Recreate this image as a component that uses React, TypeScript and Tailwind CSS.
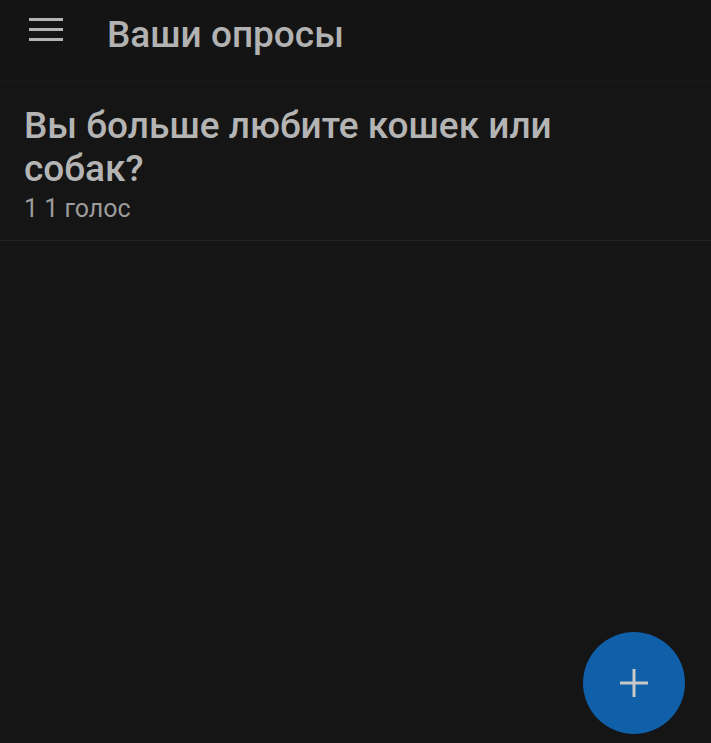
import React from "react";

export default function App() {
  return (
    <div
      className="relative w-[711px] h-[743px] bg-[#151515] overflow-hidden"
      style={{ fontFamily: "Roboto, 'Noto Sans', sans-serif" }}
    >
      <header className="h-[82px] flex items-start border-b border-[#1a1a1a] bg-[#141414]">
        <div className="w-[107px] flex pl-[29px] pt-[18px]">
          <svg width="34" height="24" viewBox="0 0 34 24">
            <rect x="0" y="0" width="34" height="3" fill="#b3b3b3" />
            <rect x="0" y="10" width="34" height="3" fill="#b3b3b3" />
            <rect x="0" y="20" width="34" height="3" fill="#b3b3b3" />
          </svg>
        </div>
        <h1 className="pt-[16px] text-[37px] leading-none font-medium text-[#b2b2b2]">
          Ваши опросы
        </h1>
      </header>
      <div className="px-[24px] pt-[22px] pb-[17px] border-b border-[#222222]">
        <div className="text-[37px] leading-[43px] font-medium text-[#b4b4b4] max-w-[560px]">
          Вы больше любите кошек или собак?
        </div>
        <div className="text-[25px] leading-[28px] text-[#9c9c9c] mt-[5px]">1 1 голос</div>
      </div>
      <button className="absolute left-[583px] top-[632px] w-[102px] h-[102px] rounded-full bg-[#0f5fa9] flex items-center justify-center">
        <svg width="28" height="28" viewBox="0 0 28 28">
          <rect x="12.5" y="0" width="3" height="28" fill="#c8c8c8" />
          <rect x="0" y="12.5" width="28" height="3" fill="#c8c8c8" />
        </svg>
      </button>
    </div>
  );
}
